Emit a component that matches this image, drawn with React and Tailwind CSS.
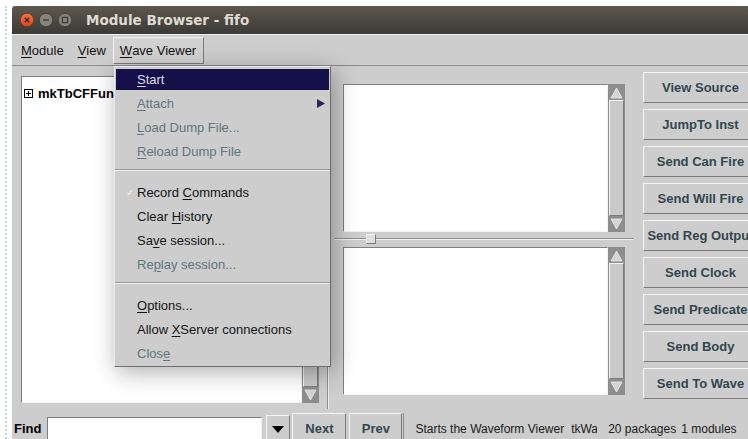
import React from "react";

// Tk-ish module browser window with the Wave Viewer menu pulled down

const rightButtons = [
  "View Source",
  "JumpTo Inst",
  "Send Can Fire",
  "Send Will Fire",
  "Send Reg Output",
  "Send Clock",
  "Send Predicate",
  "Send Body",
  "Send To Wave",
];

const Ul = ({ children }) => (
  <span className="underline underline-offset-[2px] decoration-1">{children}</span>
);

const raised =
  "border border-t-[#f4f4f4] border-l-[#f4f4f4] border-b-[#7b7b7b] border-r-[#7b7b7b]";
const sunken =
  "border border-t-[#7f7f7f] border-l-[#7f7f7f] border-b-[#f2f2f2] border-r-[#f2f2f2]";

function ScrollArrow({ dir }) {
  return (
    <div className="h-[15px] shrink-0 bg-[#8e8e8e] flex items-center justify-center">
      <svg width="13" height="12" viewBox="0 0 13 12">
        {dir === "up" ? (
          <polygon points="6.5,1 12,11 1,11" fill="#d4d4d4" stroke="#eeeeee" strokeWidth="0.8" />
        ) : (
          <polygon points="1,1 12,1 6.5,11" fill="#d4d4d4" stroke="#eeeeee" strokeWidth="0.8" />
        )}
      </svg>
    </div>
  );
}

function VScroll({ className = "" }) {
  return (
    <div className={"w-[17px] shrink-0 flex flex-col bg-[#a8a8a8] border border-[#8c8c8c] " + className}>
      <ScrollArrow dir="up" />
      <div className={"flex-1 bg-[#c9c9c9] " + raised} />
      <ScrollArrow dir="down" />
    </div>
  );
}

const menuItems = [
  { label: <><Ul>S</Ul>tart</>, active: true },
  { label: <><Ul>A</Ul>ttach</>, disabled: true, sub: true },
  { label: <><Ul>L</Ul>oad Dump File...</>, disabled: true },
  { label: <><Ul>R</Ul>eload Dump File</>, disabled: true },
  "sep",
  { label: <>Record <Ul>C</Ul>ommands</>, check: true },
  { label: <>Clear <Ul>H</Ul>istory</> },
  { label: <>Sa<Ul>v</Ul>e session...</> },
  { label: <>Re<Ul>p</Ul>lay session...</>, disabled: true },
  "sep",
  { label: <><Ul>O</Ul>ptions...</> },
  { label: <>Allow <Ul>X</Ul>Server connections</> },
  { label: <>Clos<Ul>e</Ul></>, disabled: true },
];

function WaveMenu() {
  return (
    <div className="absolute left-[114px] top-[66px] w-[217px] bg-[#cdcdcd] border border-t-[#e9e9e9] border-l-[#e9e9e9] border-b-[#6e6e6e] border-r-[#6e6e6e] pb-[1px] shadow-[3px_5px_22px_rgba(0,0,0,0.32)] text-[13px]">
      {menuItems.map((it, i) =>
        it === "sep" ? (
          <div key={i} className="h-[17px] pt-[6px]">
            <div className="h-[2px] border-t border-t-[#9a9a9a] border-b border-b-[#efefef]" />
          </div>
        ) : (
          <div key={i} className="h-[24px] pt-[2px] pb-[1px] px-[1px]">
            <div
              className={
                "relative h-full flex items-center pl-[21px] " +
                (it.active
                  ? "bg-[#15104a] text-[#dcdce6]"
                  : it.disabled
                  ? "text-[#5f767c]"
                  : "text-[#151515]")
              }
            >
              {it.check && (
                <span className="absolute left-[10px] top-[3px] text-[10px] text-[#f2f2f2]">✓</span>
              )}
              <span className="whitespace-nowrap">{it.label}</span>
              {it.sub && (
                <svg className="absolute right-[4px] top-[6px]" width="8" height="9" viewBox="0 0 8 9">
                  <polygon points="0,0 8,4.5 0,9" fill="#2b2566" />
                </svg>
              )}
            </div>
          </div>
        )
      )}
    </div>
  );
}

function WindowControls() {
  return (
    <div className="flex items-center gap-[5px] pl-[8px]">
      <svg width="14" height="14" viewBox="0 0 14 14">
        <defs>
          <linearGradient id="cls" x1="0" y1="0" x2="0" y2="1">
            <stop offset="0" stopColor="#f2774a" />
            <stop offset="1" stopColor="#d9461c" />
          </linearGradient>
        </defs>
        <circle cx="7" cy="7" r="6.6" fill="url(#cls)" stroke="#7a2b12" strokeWidth="0.6" />
        <path d="M4.8 4.8 L9.2 9.2 M9.2 4.8 L4.8 9.2" stroke="#4a1c0e" strokeWidth="1.3" />
      </svg>
      <svg width="14" height="14" viewBox="0 0 14 14">
        <circle cx="7" cy="7" r="6.6" fill="#88847c" stroke="#35332f" strokeWidth="0.6" />
        <path d="M4 7 H10" stroke="#3a3834" strokeWidth="1.4" />
      </svg>
      <svg width="14" height="14" viewBox="0 0 14 14">
        <circle cx="7" cy="7" r="6.6" fill="#88847c" stroke="#35332f" strokeWidth="0.6" />
        <rect x="4.4" y="4.4" width="5.2" height="5.2" fill="none" stroke="#3a3834" strokeWidth="1.2" />
      </svg>
    </div>
  );
}

export default function App() {
  return (
    <div className="relative w-[748px] h-[439px] overflow-hidden bg-white font-['Liberation_Sans',Arial,sans-serif]">
      <div className="h-[6px] bg-white" />
      <div className="flex h-[433px]">
        {/* desktop strip on the left */}
        <div className="w-[12px] shrink-0 bg-white flex justify-center">
          <div className="w-0 h-full border-l-2 border-dotted border-[#c9d5e2]" />
        </div>

        <div className="flex-1 flex flex-col bg-[#cdcdcd] min-w-0">
          {/* title bar */}
          <div className="h-[28px] shrink-0 flex items-center bg-gradient-to-b from-[#5c5850] to-[#3c3a35] rounded-tl-[4px]">
            <WindowControls />
            <span className="ml-[14px] text-[13.5px] font-bold text-[#dfdbd2] whitespace-pre font-['DejaVu_Sans',sans-serif]">
              Module Browser - fifo
            </span>
          </div>

          {/* menu bar */}
          <div className="h-[32px] shrink-0 flex items-start pt-[2px] pl-[2px] border-t border-t-[#f2f2f2] border-b border-b-[#8c8c8c] text-[13px] text-[#111]">
            <div className="h-[27px] flex items-center px-[7px]">
              <Ul>M</Ul>odule
            </div>
            <div className="h-[27px] flex items-center px-[7px]">
              <Ul>V</Ul>iew
            </div>
            <div className={"h-[27px] flex items-center pl-[6px] pr-[7px] bg-[#d2d2d2] " + raised}>
              <Ul>W</Ul>ave Viewer
            </div>
          </div>

          {/* main area */}
          <div className="h-[344px] shrink-0 flex">
            {/* module list */}
            <div className="w-[307px] shrink-0 flex pl-[9px] pt-[10px] pb-[7px]">
              <div className={"w-[281px] bg-white pt-[7px] pl-[2px] " + sunken}>
                <div className="flex items-center gap-[5px] text-[13px] font-bold text-black whitespace-nowrap">
                  <svg width="9" height="9" viewBox="0 0 9 9">
                    <rect x="0.5" y="0.5" width="8" height="8" fill="white" stroke="#000" />
                    <path d="M2 4.5 H7 M4.5 2 V7" stroke="#000" />
                  </svg>
                  mkTbCFFunnel
                </div>
              </div>
              <VScroll />
            </div>

            {/* pane sash */}
            <div className="w-[24px] shrink-0 pl-[8px] pb-[1px]">
              <div className="h-full w-[2px] border-l border-l-[#8e8e8e] border-r border-r-[#ececec]" />
            </div>

            {/* wave panes */}
            <div className="w-[290px] shrink-0 flex flex-col pt-[18px]">
              <div className="flex h-[148px]">
                <div className={"w-[265px] bg-white " + sunken} />
                <VScroll />
              </div>
              <div className="relative h-[15px] -ml-[8px]">
                <div className="absolute left-0 right-0 top-[6px] h-[2px] border-t border-t-[#8e8e8e] border-b border-b-[#efefef]" />
                <div className={"absolute left-[31px] top-[2px] w-[10px] h-[10px] bg-[#dedede] " + raised} />
              </div>
              <div className="flex h-[148px]">
                <div className={"w-[265px] bg-white " + sunken} />
                <VScroll />
              </div>
            </div>

            {/* action buttons */}
            <div className="flex flex-col gap-[6px] pt-[6px] pl-[10px]">
              {rightButtons.map((b) => (
                <div
                  key={b}
                  className={
                    "w-[115px] h-[31px] shrink-0 flex items-center justify-center whitespace-nowrap text-[13px] font-bold text-[#31474f] bg-[#cdcdcd] " +
                    raised
                  }
                >
                  {b}
                </div>
              ))}
            </div>
          </div>

          {/* find bar and status */}
          <div className="flex-1 flex items-start text-[13px] min-h-0">
            <div className="shrink-0 mt-[9px] pl-[2px] font-bold text-black">Find</div>
            <div className={"shrink-0 ml-[6px] mt-[7px] w-[215px] h-[26px] bg-white " + sunken} />
            <div className={"shrink-0 ml-[4px] mt-[5px] w-[24px] h-[28px] flex items-center justify-center bg-[#cdcdcd] " + raised}>
              <svg width="12" height="7" viewBox="0 0 12 7">
                <polygon points="0,0 12,0 6,7" fill="#000" />
              </svg>
            </div>
            <div className={"shrink-0 ml-[2px] mt-[3px] w-[54px] h-[31px] flex items-center justify-center font-bold text-[#31474f] bg-[#cdcdcd] " + raised}>
              Next
            </div>
            <div className={"shrink-0 ml-[3px] mt-[3px] w-[53px] h-[31px] flex items-center justify-center font-bold text-[#31474f] bg-[#cdcdcd] " + raised}>
              Prev
            </div>
            <div className="shrink-0 ml-[1px] mt-[3px] h-[31px] flex items-center pl-[11px] border-l border-l-[#8e8e8e] text-[12px] text-[#1a1a1a] whitespace-nowrap">
              <span>Starts the Waveform Viewer</span>
              <span className="ml-[7px] w-[26px] overflow-hidden inline-block">tkWave</span>
              <span className="ml-[11px]">20 packages</span>
              <span className="ml-[5px]">1 modules</span>
            </div>
          </div>
        </div>
      </div>
      <WaveMenu />
    </div>
  );
}
